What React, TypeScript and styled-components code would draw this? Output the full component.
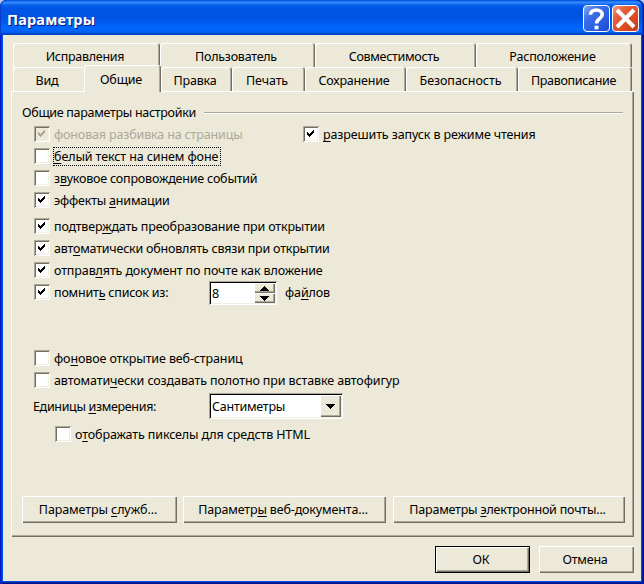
import React from 'react';
import styled, { createGlobalStyle, css } from 'styled-components';

const face = '#ece9d8';
const shadow = '#aca899';
const dark = '#716f64';

const GlobalStyle = createGlobalStyle`
  *, *::before, *::after { box-sizing: border-box; }
  body { margin: 0; background: #b9c6ea; overflow: hidden; }
`;

const Window = styled.div`
  display: flex;
  flex-direction: column;
  width: 644px;
  height: 584px;
  padding: 0 3px 3px;
  border-radius: 7px 7px 0 0;
  background: #0050e0;
  box-shadow: inset 1px 0 #0019cf, inset 2px 0 #0831d9, inset -1px 0 #00138c, inset -2px 0 #001ea0, inset 0 -1px #00138c, inset 0 -2px #001ea0;
  font: 12.5px/16px "Noto Sans", sans-serif;
  color: #000;
`;

const TitleBar = styled.header`
  display: flex;
  align-items: center;
  flex: none;
  height: 35px;
  margin: 0 -3px;
  padding: 2px 5px 0 7px;
  gap: 2px;
  border-radius: 7px 7px 0 0;
  background: linear-gradient(to bottom,
    #0058d8 0, #0a5ce8 1px, #3a90ff 2px, #2b80fa 3px, #0b62ee 5px, #0055e5 8px,
    #0053e1 16px, #0058ea 21px, #0064fa 26px, #0066ff 30px, #005cf0 32px, #0046c8 34px, #003cb4 35px);
  box-shadow: inset 1px 0 #0a3ccc, inset -1px 0 #0020a0, inset -2px 0 #0038c0;
`;

const Title = styled.h1`
  flex: 1;
  margin: 0;
  font: bold 14.5px/20px "Noto Sans", sans-serif;
  letter-spacing: 0.15px;
  color: #fff;
  text-shadow: 1px 1px #0a1883;
`;

const CaptionButton = styled.button<{ $close?: boolean }>`
  display: flex;
  align-items: center;
  justify-content: center;
  width: 27px;
  height: 27px;
  padding: 0;
  border: 1px solid #fff;
  border-radius: 4px;
  background: ${p => p.$close
    ? 'linear-gradient(135deg, #f0a183 0, #e5603d 28%, #dd4a22 65%, #c23a12 100%)'
    : 'linear-gradient(135deg, #8aa9f5 0, #3f70e8 30%, #2a5fe3 65%, #1b48c8 100%)'};
`;

const Body = styled.main`
  flex: 1;
  display: flex;
  flex-direction: column;
  padding: 8px 7px 8px 8px;
  background: ${face};
`;

const TabRow = styled.div<{ $front?: boolean }>`
  display: flex;
  align-items: flex-end;
  height: 24px;
  margin: 0 2px;
  ${p => p.$front && css`z-index: 1;`}
`;

const Tab = styled.div<{ $w: number; $track: number; $selected?: boolean; $covered?: boolean }>`
  flex: none;
  display: flex;
  align-items: center;
  justify-content: center;
  width: ${p => p.$w}px;
  height: 24px;
  padding-top: 4px;
  padding-right: 3px;
  border-radius: 3px 3px 0 0;
  background: ${face};
  letter-spacing: ${p => p.$track}px;
  white-space: nowrap;
  box-shadow: ${p => p.$covered
    ? 'inset 1px 1px #fff'
    : `inset 1px 1px #fff, inset -1px 0 ${dark}, inset -2px 0 ${shadow}`};
  ${p => p.$selected && css`
    height: 27px;
    margin-bottom: -1px;
    padding-bottom: 1px;
  `}
`;

const Panel = styled.section`
  display: flex;
  flex-direction: column;
  width: 623px;
  height: 446px;
  padding: 13px 9px 14px 11px;
  box-shadow: inset 1px 1px #fff, inset -1px -1px ${dark}, inset -2px -2px ${shadow};
`;

const GroupHeading = styled.h2`
  display: flex;
  align-items: center;
  gap: 8px;
  height: 18px;
  margin: 0;
  font: inherit;
  letter-spacing: -0.3px;
  &::after {
    content: '';
    flex: 1;
    height: 2px;
    margin-right: 2px;
    border-top: 1px solid ${shadow};
    border-bottom: 1px solid #fff;
  }
`;

const Text = styled.span<{ $track: number; $w?: number; $disabled?: boolean }>`
  padding-top: 1px;
  ${p => p.$w && css`width: ${p.$w}px; flex: none;`}
  letter-spacing: ${p => p.$track}px;
  white-space: nowrap;
  color: ${p => (p.$disabled ? shadow : '#000')};
  u { text-decoration-thickness: 1px; text-underline-offset: 2px; text-decoration-skip-ink: none; }
`;

const CheckGroup = styled.div<{ $top: number }>`
  display: grid;
  grid-auto-rows: 22px;
  margin: ${p => p.$top}px 0 0 12px;
`;

const Line = styled.div`
  display: flex;
  align-items: flex-start;
  height: 22px;
`;

const Check = styled.label<{ $w?: number; $indent?: number }>`
  display: flex;
  align-items: flex-start;
  gap: 4px;
  height: 16px;
  padding-left: ${p => p.$indent ?? 0}px;
  ${p => p.$w && css`width: ${p.$w}px; flex: none;`}
`;

const Box = styled.span<{ $disabled?: boolean }>`
  flex: none;
  display: flex;
  width: 16px;
  height: 16px;
  padding: 4px;
  background: ${p => (p.$disabled ? face : '#fff')};
  box-shadow: inset 1px 1px ${shadow}, inset -1px -1px #fff, inset 2px 2px ${dark}, inset -2px -2px #f1efe2;
`;

const Focus = styled.span`
  display: flex;
  height: 19px;
  width: 168px;
  margin: -1px 0 0 -1px;
  border: 1px dotted #000;
`;

const Field = styled.div<{ $w: number; $h: number }>`
  flex: none;
  display: flex;
  align-items: stretch;
  width: ${p => p.$w}px;
  height: ${p => p.$h}px;
  padding: 2px;
  background: #fff;
  box-shadow: inset 1px 1px ${shadow}, inset -1px -1px #fff, inset 2px 2px #000, inset -2px -2px #f1efe2;
`;

const Value = styled.span<{ $track?: number }>`
  flex: 1;
  align-self: center;
  padding: 1px 0 0 1px;
  letter-spacing: ${p => p.$track ?? 0}px;
`;

const Stepper = styled.div`
  display: grid;
  grid-template-rows: 1fr 1fr;
  width: 21px;
`;

const ArrowButton = styled.button<{ $w: number }>`
  display: flex;
  align-items: center;
  justify-content: center;
  width: ${p => p.$w}px;
  min-height: 0;
  padding: 0;
  border: 0;
  background: ${face};
  box-shadow: inset 1px 1px #fff, inset -1px -1px ${dark}, inset -2px -2px ${shadow};
`;

const SpinLine = styled.div`
  display: flex;
  align-items: flex-start;
  height: 24px;
  ${Field} { margin-top: -3px; }
`;

const Units = styled.div`
  display: flex;
  align-items: center;
  height: 26px;
  margin: -1px 0 0 11px;
`;

const SubOption = styled.div`
  margin: 7px 0 0 33px;
`;

const ButtonRow = styled.div`
  display: flex;
  margin-top: auto;
  gap: 6px;
`;

const PushButton = styled.button<{ $w: number; $track: number; $primary?: boolean }>`
  flex: none;
  width: ${p => p.$w}px;
  height: 27px;
  padding: 1px 3px 0 0;
  border: 0;
  background: ${face};
  font: inherit;
  letter-spacing: ${p => p.$track}px;
  color: #000;
  white-space: nowrap;
  box-shadow: ${p => p.$primary
    ? `inset 0 0 0 1px #000, inset 2px 2px #fff, inset -2px -2px ${dark}, inset -3px -3px ${shadow}`
    : `inset 1px 1px #fff, inset -1px -1px ${dark}, inset -2px -2px ${shadow}`};
  u { text-decoration-thickness: 1px; text-underline-offset: 2px; text-decoration-skip-ink: none; }
  &:nth-child(3) { margin-left: 1px; }
`;

const Footer = styled.footer`
  display: flex;
  justify-content: flex-end;
  gap: 9px;
  margin-top: 9px;
`;

const Tick = ({ disabled }: { disabled?: boolean }) => (
  <svg width="8" height="8" viewBox="0 0 8 8" shapeRendering="crispEdges">
    <path d="M0 2h1v1h1v1h1v-1h1v-1h1v-1h1v-1h1v3h-1v1h-1v1h-1v1h-1v1h-1v-1h-1v-1h-1z" fill={disabled ? shadow : '#000'} />
  </svg>
);

const Arrow = ({ up }: { up?: boolean }) => (
  <svg width="9" height="5" viewBox="0 0 9 5" shapeRendering="crispEdges">
    <path d={up ? 'M4 0h1v1h1v1h1v1h1v1h1v1h-9v-1h1v-1h1v-1h1v-1h1z' : 'M0 0h9v1h-1v1h-1v1h-1v1h-1v1h-1v-1h-1v-1h-1v-1h-1v-1h-1z'} />
  </svg>
);

type OptionProps = {
  children: React.ReactNode;
  track: number;
  checked?: boolean;
  disabled?: boolean;
  focused?: boolean;
  width?: number;
};

const Option = ({ children, track, checked, disabled, focused, width }: OptionProps) => {
  const text = <Text $track={track} $disabled={disabled}>{children}</Text>;
  return (
    <Check $w={width}>
      <Box $disabled={disabled}>{checked && <Tick disabled={disabled} />}</Box>
      {focused ? <Focus>{text}</Focus> : text}
    </Check>
  );
};

export default function App() {
  return (
    <>
      <GlobalStyle />
      <Window>
        <TitleBar>
          <Title>Параметры</Title>
          <CaptionButton aria-label="Справка">
            <svg width="17" height="22" viewBox="0 0 17 22" fill="none" stroke="#fff" strokeWidth="3.6">
              <path d="M2.5 6.8C2.5 3.5 5 2 8.3 2s5.9 1.6 5.9 4.6c0 4-5.6 4.2-5.6 8.9" />
              <path d="M6.5 19.5h4" />
            </svg>
          </CaptionButton>
          <CaptionButton $close aria-label="Закрыть">
            <svg width="21" height="21" viewBox="0 0 21 21" stroke="#fff" strokeWidth="4">
              <path d="M2 2l17 17M19 2l-17 17" />
            </svg>
          </CaptionButton>
        </TitleBar>
        <Body>
          <TabRow>
            <Tab $w={147} $track={-0.28}>Исправления</Tab>
            <Tab $w={155} $track={-0.25}>Пользователь</Tab>
            <Tab $w={161} $track={-0.3}>Совместимость</Tab>
            <Tab $w={156} $track={-0.16}>Расположение</Tab>
          </TabRow>
          <TabRow $front>
            <Tab $w={71} $track={-0.2} $covered>Вид</Tab>
            <Tab $w={77} $track={-0.15} $selected>Общие</Tab>
            <Tab $w={71} $track={-0.2}>Правка</Tab>
            <Tab $w={73} $track={-0.1}>Печать</Tab>
            <Tab $w={101} $track={-0.2}>Сохранение</Tab>
            <Tab $w={112} $track={-0.06}>Безопасность</Tab>
            <Tab $w={114} $track={-0.33}>Правописание</Tab>
          </TabRow>
          <Panel>
            <GroupHeading>Общие параметры настройки</GroupHeading>
            <CheckGroup $top={4}>
              <Line>
                <Option width={269} track={-0.15} checked disabled>фоновая разбивка на страницы</Option>
                <Option track={-0.13} checked><u>р</u>азрешить запуск в режиме чтения</Option>
              </Line>
              <Option track={-0.1} focused><u>б</u>елый текст на синем фоне</Option>
              <Option track={-0.2}>з<u>в</u>уковое сопровождение событий</Option>
              <Option track={-0.2} checked>эффекты <u>а</u>нимации</Option>
            </CheckGroup>
            <CheckGroup $top={4}>
              <Option track={-0.18} checked>подтвер<u>ж</u>дать преобразование при открытии</Option>
              <Option track={-0.21} checked>авт<u>о</u>матически обновлять связи при открытии</Option>
              <Option track={-0.12} checked>отправ<u>л</u>ять документ по почте как вложение</Option>
              <SpinLine>
                <Option width={175} track={-0.2} checked>помнит<u>ь</u> список из:</Option>
                <Field $w={68} $h={24}>
                  <Value>8</Value>
                  <Stepper>
                    <ArrowButton $w={21} aria-label="Больше"><Arrow up /></ArrowButton>
                    <ArrowButton $w={21} aria-label="Меньше"><Arrow /></ArrowButton>
                  </Stepper>
                </Field>
                <Check $indent={8}><Text $track={-0.13}>фа<u>й</u>лов</Text></Check>
              </SpinLine>
            </CheckGroup>
            <CheckGroup $top={44}>
              <Option track={-0.12}>фо<u>н</u>овое открытие веб-страниц</Option>
              <Option track={-0.12}>автомати<u>ч</u>ески создавать полотно при вставке автофигур</Option>
            </CheckGroup>
            <Units>
              <Text $track={-0.33} $w={176}>Единицы <u>и</u>змерения:</Text>
              <Field $w={134} $h={26}>
                <Value $track={-0.25}>Сантиметры</Value>
                <ArrowButton $w={21} aria-label="Открыть список"><Arrow /></ArrowButton>
              </Field>
            </Units>
            <SubOption>
              <Option track={-0.12}>о<u>т</u>ображать пикселы для средств HTML</Option>
            </SubOption>
            <ButtonRow>
              <PushButton $w={155} $track={-0.1}>Параметры <u>с</u>лужб...</PushButton>
              <PushButton $w={203} $track={-0.15}>Параметр<u>ы</u> веб-документа...</PushButton>
              <PushButton $w={232} $track={-0.2}>Параметры <u>э</u>лектронной почты...</PushButton>
            </ButtonRow>
          </Panel>
          <Footer>
            <PushButton $w={95} $track={-0.2} $primary>ОК</PushButton>
            <PushButton $w={95} $track={-0.2}>Отмена</PushButton>
          </Footer>
        </Body>
      </Window>
    </>
  );
}
